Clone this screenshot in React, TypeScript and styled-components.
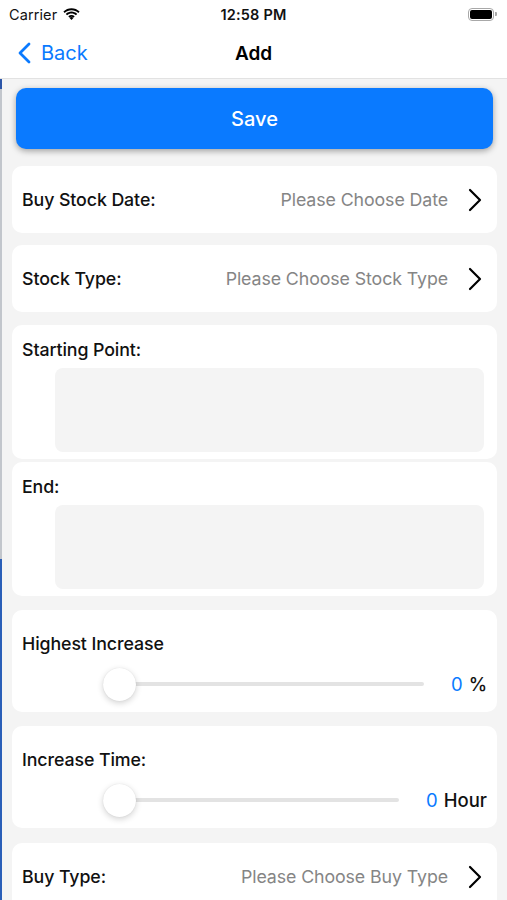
import React from 'react';
import styled, { createGlobalStyle } from 'styled-components';

const GlobalStyle = createGlobalStyle`
  html, body {
    margin: 0;
    padding: 0;
    background: #ffffff;
  }
  body {
    font-family: Inter, "Noto Sans", "Liberation Sans", sans-serif;
    -webkit-font-smoothing: antialiased;
  }
`

const Page = styled.div`
  width: 507px;
  height: 900px;
  overflow: hidden;
  display: flex;
  flex-direction: column;
  background: #ffffff;
`

const StatusBar = styled.div`
  height: 28px;
  flex-shrink: 0;
  display: grid;
  grid-template-columns: 1fr auto 1fr;
  align-items: center;
  padding: 0 9px;
  font-size: 14.5px;
  color: #111;
`

const Carrier = styled.div`
  display: flex;
  align-items: center;
  gap: 6px;
  letter-spacing: 0.1px;
`

const Clock = styled.div`
  font-weight: 600;
  letter-spacing: 0.2px;
`

const BatteryWrap = styled.div`
  justify-self: end;
  display: flex;
  align-items: center;
  gap: 1px;
  margin-right: 1px;
`

const BatteryBody = styled.div`
  width: 22px;
  height: 9px;
  border: 1.5px solid #a8a8a8;
  border-radius: 4px;
  padding: 1px;
  display: flex;
`

const BatteryFill = styled.div`
  flex: 1;
  background: #000;
  border-radius: 2px;
`

const BatteryNub = styled.div`
  width: 2px;
  height: 4px;
  background: #a8a8a8;
  border-radius: 0 1px 1px 0;
`

const NavBar = styled.div`
  height: 50px;
  flex-shrink: 0;
  position: relative;
  display: flex;
  align-items: center;
  justify-content: center;
  border-bottom: 1px solid #e2e2e2;
`

const BackButton = styled.div`
  position: absolute;
  left: 17px;
  top: 0;
  bottom: 0;
  display: flex;
  align-items: center;
  gap: 10px;
  color: #0a7aff;
  font-size: 20px;
`

const Title = styled.div`
  font-size: 19px;
  font-weight: 600;
  color: #000;
`

const Body = styled.div`
  flex: 1;
  display: flex;
  background: #f4f4f4;
  min-height: 0;
`

const EdgeStrip = styled.div`
  width: 2px;
  flex-shrink: 0;
  background: linear-gradient(
    to bottom,
    #2c56a8 0px,
    #2c56a8 10px,
    #c2c6cc 10px,
    #c2c6cc 480px,
    #2a5fb8 480px,
    #2a5fb8 100%
  );
`

const Column = styled.div`
  flex: 1;
  display: flex;
  flex-direction: column;
  padding: 9px 10px 0 10px;
  min-width: 0;
`

const SaveButton = styled.div`
  flex-shrink: 0;
  margin: 0 4px 17px 4px;
  height: 61px;
  border-radius: 10px;
  background: #0a7aff;
  color: #fff;
  font-size: 20px;
  font-weight: 500;
  display: flex;
  align-items: center;
  justify-content: center;
  box-shadow: 0 2px 6px rgba(0, 0, 0, 0.35);
`

const Card = styled.div<{ $gap?: number }>`
  background: #fff;
  border-radius: 10px;
  margin-bottom: ${(p) => (p.$gap ?? 12)}px;
  padding: 0 10px;
  flex-shrink: 0;
`

const PickerRow = styled.div`
  height: 67px;
  display: flex;
  align-items: center;
`

const Label = styled.div`
  font-size: 17.8px;
  line-height: 22px;
  font-weight: 500;
  color: #111;
  letter-spacing: -0.1px;
`

const Placeholder = styled.div`
  margin-left: auto;
  font-size: 17.8px;
  color: #858585;
  letter-spacing: -0.1px;
  white-space: nowrap;
`

const Chevron = styled.svg`
  margin: 0 5px 0 20px;
  flex-shrink: 0;
`

const AreaCard = styled(Card)`
  padding: 14px 13px 7px 10px;
  display: flex;
  flex-direction: column;
  gap: 7px;
`

const TextArea = styled.div`
  margin-left: 33px;
  height: 84px;
  border-radius: 8px;
  background: #f4f4f4;
`

const SliderCard = styled(Card)`
  height: 102px;
  padding-top: 23px;
  box-sizing: border-box;
  display: flex;
  flex-direction: column;
`

const SliderRow = styled.div`
  margin-top: 18px;
  display: flex;
  align-items: center;
  padding-left: 81px;
`

const Track = styled.div`
  flex: 1;
  height: 4px;
  border-radius: 2px;
  background: #e3e3e3;
  position: relative;
`

const Thumb = styled.div`
  position: absolute;
  left: 0;
  top: 50%;
  width: 33px;
  height: 33px;
  margin-top: -16.5px;
  border-radius: 50%;
  background: #fff;
  box-shadow: 0 2px 6px rgba(0, 0, 0, 0.18), 0 0 1px rgba(0, 0, 0, 0.12);
`

const ValueGroup = styled.div`
  margin-left: 27px;
  display: flex;
  align-items: center;
  gap: 6px;
  font-size: 18.5px;
  font-weight: 500;
  color: #111;
`

const Value = styled.span`
  color: #0a7aff;
  font-weight: 400;
`

const ChevronIcon = () => (
  <Chevron width="14" height="24" viewBox="0 0 14 24">
    <polyline points="2,2 12,12 2,22" fill="none" stroke="#000" strokeWidth="2.2" strokeLinecap="round" strokeLinejoin="round" />
  </Chevron>
)

const Wifi = () => (
  <svg width="17" height="12" viewBox="0 0 17 12">
    <path d="M8.5 2.2c2.6 0 5 1 6.8 2.7l1.3-1.4C14.4 1.4 11.6.2 8.5.2S2.6 1.4.4 3.5l1.3 1.4C3.5 3.2 5.9 2.2 8.5 2.2z" fill="#000" />
    <path d="M8.5 5.6c1.7 0 3.2.6 4.4 1.7l1.3-1.4C12.6 4.5 10.6 3.6 8.5 3.6S4.4 4.5 2.8 5.9l1.3 1.4c1.2-1.1 2.7-1.7 4.4-1.7z" fill="#000" />
    <path d="M8.5 8.9c.8 0 1.5.3 2.1.8l-2.1 2.2-2.1-2.2c.6-.5 1.3-.8 2.1-.8z" fill="#000" />
    <path d="M8.5 7c1.2 0 2.3.4 3.2 1.2l-1.1 1.4c-.6-.5-1.3-.8-2.1-.8s-1.5.3-2.1.8L5.3 8.2C6.2 7.4 7.3 7 8.5 7z" fill="#000" />
  </svg>
)

const BackChevron = () => (
  <svg width="14" height="22" viewBox="0 0 14 22">
    <polyline points="12,2 3,11 12,20" fill="none" stroke="#0a7aff" strokeWidth="2.8" strokeLinecap="round" strokeLinejoin="round" />
  </svg>
)

interface PickerProps {
  label: string
  placeholder: string
  gap?: number
}

const Picker = ({ label, placeholder, gap }: PickerProps) => (
  <Card $gap={gap}>
    <PickerRow>
      <Label>{label}</Label>
      <Placeholder>{placeholder}</Placeholder>
      <ChevronIcon />
    </PickerRow>
  </Card>
)

interface SliderProps {
  label: string
  unit: string
  gap?: number
}

const SliderField = ({ label, unit, gap }: SliderProps) => (
  <SliderCard $gap={gap}>
    <Label>{label}</Label>
    <SliderRow>
      <Track>
        <Thumb />
      </Track>
      <ValueGroup>
        <Value>0</Value>
        <span>{unit}</span>
      </ValueGroup>
    </SliderRow>
  </SliderCard>
)

export default function App() {
  return (
    <Page>
      <GlobalStyle />
      <StatusBar>
        <Carrier>
          Carrier
          <Wifi />
        </Carrier>
        <Clock>12:58 PM</Clock>
        <BatteryWrap>
          <BatteryBody>
            <BatteryFill />
          </BatteryBody>
          <BatteryNub />
        </BatteryWrap>
      </StatusBar>
      <NavBar>
        <BackButton>
          <BackChevron />
          Back
        </BackButton>
        <Title>Add</Title>
      </NavBar>
      <Body>
        <EdgeStrip />
        <Column>
          <SaveButton>Save</SaveButton>
          <Picker label="Buy Stock Date:" placeholder="Please Choose Date" />
          <Picker label="Stock Type:" placeholder="Please Choose Stock Type" gap={13} />
          <AreaCard $gap={3}>
            <Label>Starting Point:</Label>
            <TextArea />
          </AreaCard>
          <AreaCard $gap={14}>
            <Label>End:</Label>
            <TextArea />
          </AreaCard>
          <SliderField label="Highest Increase" unit="%" gap={14} />
          <SliderField label="Increase Time:" unit="Hour" gap={15} />
          <Picker label="Buy Type:" placeholder="Please Choose Buy Type" />
        </Column>
      </Body>
    </Page>
  )
}
